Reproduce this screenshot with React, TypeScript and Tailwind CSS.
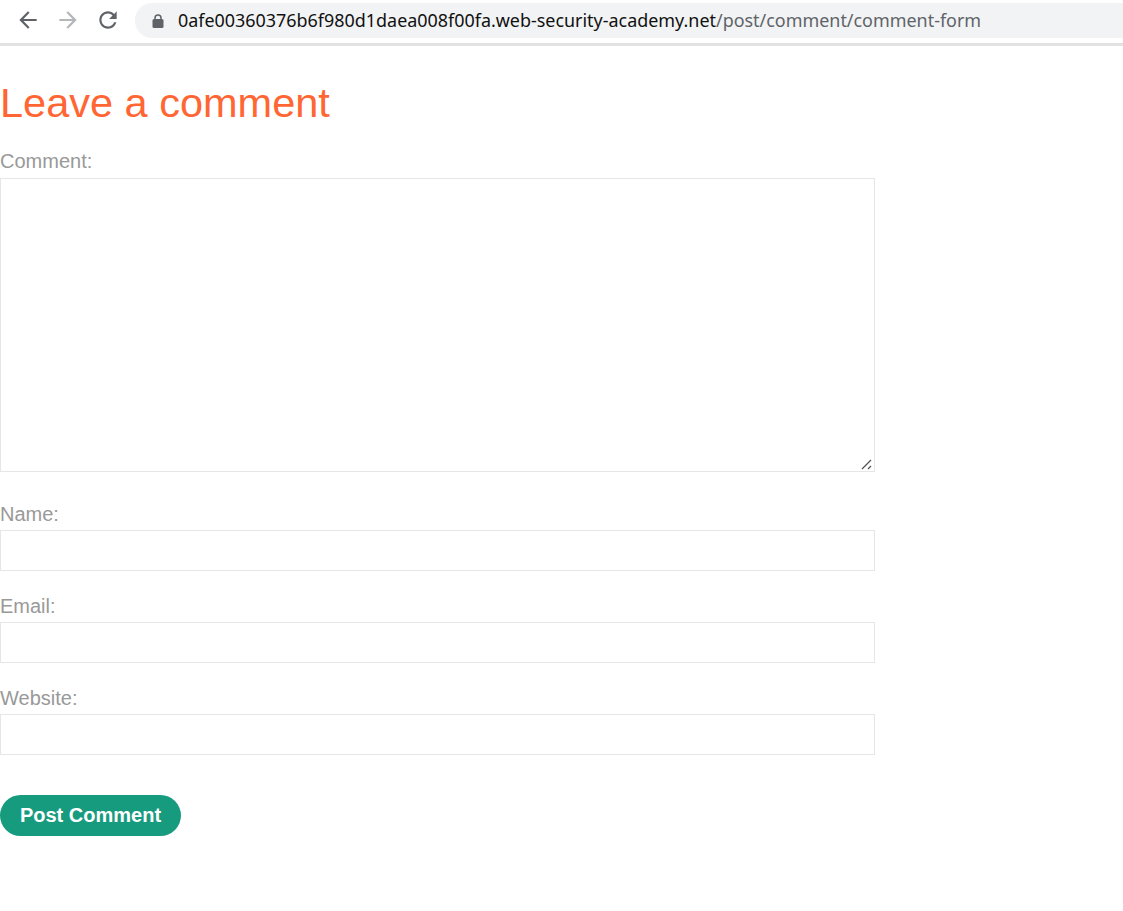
import React from 'react';

const BackIcon = ({ color, flip }: { color: string; flip?: boolean }) => (
  <svg width="26" height="26" viewBox="0 0 24 24" fill={color} className={flip ? 'rotate-180' : ''}>
    <path d="M20 11H7.83l5.59-5.59L12 4l-8 8 8 8 1.41-1.41L7.83 13H20v-2z" />
  </svg>
);

const ReloadIcon = () => (
  <svg width="26" height="26" viewBox="0 0 24 24" fill="#5f6368">
    <path d="M17.65 6.35C16.2 4.9 14.21 4 12 4c-4.42 0-7.99 3.58-7.99 8s3.57 8 7.99 8c3.73 0 6.84-2.55 7.73-6h-2.08c-.82 2.33-3.04 4-5.65 4-3.31 0-6-2.69-6-6s2.69-6 6-6c1.66 0 3.14.69 4.22 1.78L13 11h7V4l-2.35 2.35z" />
  </svg>
);

const LockIcon = () => (
  <svg width="12" height="14" viewBox="0 0 12 14">
    <rect x="0.5" y="5" width="11" height="9" rx="1.5" fill="#5f6368" />
    <path d="M3 5.5V4a3 3 0 0 1 6 0v1.5" fill="none" stroke="#5f6368" strokeWidth="1.5" />
  </svg>
);

const Field = ({ label }: { label: string }) => (
  <div className="mb-[24px] w-[875px]">
    <label className="mb-[4px] block text-[20px] leading-[23px] text-[#999999]">{label}</label>
    <input type="text" className="block h-[41px] w-full border border-[#e6e6e6] bg-white outline-none" />
  </div>
);

const App = () => {
  return (
    <div className="min-h-[911px] bg-white font-['Liberation_Sans',Arial,sans-serif]">
      {/* browser bar */}
      <div className="flex h-[46px] items-start border-b-[3px] border-[#e2e2e2] bg-white pt-[3px]">
        <div className="flex h-[34px] w-[135px] items-center gap-[14px] pl-[15px]">
          <BackIcon color="#5f6368" />
          <BackIcon color="#b4b6b9" flip />
          <ReloadIcon />
        </div>
        <div className="flex h-[35px] flex-1 items-center rounded-l-[17px] bg-[#f1f3f4] pl-[17px]">
          <LockIcon />
          <span className="ml-[14px] font-['Noto_Sans',sans-serif] text-[17.93px] whitespace-nowrap text-[#5f6368]">
            <span className="text-[#111111]">0afe00360376b6f980d1daea008f00fa.web-security-academy.net</span>
            /post/comment/comment-form
          </span>
        </div>
      </div>

      {/* form */}
      <h1 className="mt-[31px] text-[41.5px] leading-[52px] font-normal text-[#ff6633]">Leave a comment</h1>
      <div className="mt-[21px] w-[875px]">
        <label className="mb-[5px] block text-[20px] leading-[23px] text-[#999999]">Comment:</label>
        <div className="relative">
          <textarea className="block h-[294px] w-[875px] resize-none border border-[#e6e6e6] bg-white outline-none" />
          {/* resize grip */}
          <svg width="12" height="11" viewBox="0 0 12 11" className="absolute right-[2px] bottom-[2px]">
            <path d="M1 10L10 1M7 10L10 7" stroke="#555555" strokeWidth="1.3" fill="none" />
          </svg>
        </div>
      </div>
      <div className="mt-[31px]">
        <Field label="Name:" />
        <Field label="Email:" />
        <Field label="Website:" />
      </div>
      <button className="mt-[16px] h-[41px] w-[181px] rounded-[21px] bg-[#179b7f] pb-[2px] text-[20px] font-bold text-white">
        Post Comment
      </button>
    </div>
  );
};

export default App;
